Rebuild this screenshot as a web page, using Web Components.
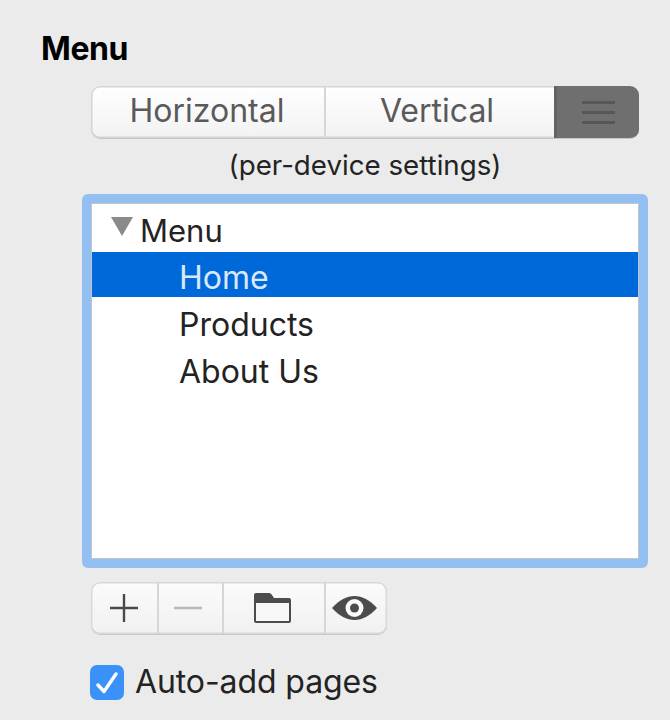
<!DOCTYPE html>
<html>
<head>
<meta charset="utf-8">
<style>
  html, body { margin: 0; background: #ebebeb; }
  body { font-family: Inter, "Liberation Sans", sans-serif; color: #232323; }
</style>
</head>
<body>
<settings-panel title-text="Menu">
  <seg-control></seg-control>
  <caption-text>(per-device settings)</caption-text>
  <menu-tree></menu-tree>
  <tool-bar></tool-bar>
  <check-row>Auto-add pages</check-row>
</settings-panel>

<script>
class SettingsPanel extends HTMLElement {
  connectedCallback() {
    this.attachShadow({ mode: 'open' });
    this.shadowRoot.innerHTML = `
      <style>
        :host { display: block; width: 670px; height: 720px; box-sizing: border-box; padding: 31px 0 0 41px; overflow: hidden; }
        h1 { margin: 0; font-size: 32px; line-height: 36px; font-weight: 700; color: #000; letter-spacing: -0.4px; }
        .body { display: flex; flex-direction: column; margin: 19px 0 0 41px; width: 566px; }
      </style>
      <h1>${this.getAttribute('title-text')}</h1>
      <div class="body">
        <slot></slot>
      </div>
    `;
  }
}

class SegControl extends HTMLElement {
  connectedCallback() {
    this.attachShadow({ mode: 'open' });
    this.shadowRoot.innerHTML = `
      <style>
        :host { display: flex; box-sizing: border-box; width: 548px; height: 53px; margin-left: 9px; border-radius: 9px; overflow: hidden; background: linear-gradient(#ffffff, #f2f2f2); box-shadow: inset 0 0 0 1.5px #d4d4d4; border-bottom: 1px solid #c6c6c6; }
        .seg { display: flex; align-items: center; justify-content: center; font-size: 32px; color: #5a5a5a; padding-bottom: 3px; box-sizing: border-box; }
        .seg + .seg { border-left: 2px solid #d6d6d6; }
        .a { width: 233px; padding-right: 1px; }
        .b { width: 230px; padding-right: 6px; }
        .c { flex: 1; background: #6f6f6f; border-left: 3px solid #636363 !important; flex-direction: column; gap: 7px; margin-bottom: -1px; padding-bottom: 0; }
        .c i { display: block; width: 33px; height: 3px; background: #575757; }
      </style>
      <div class="seg a">Horizontal</div>
      <div class="seg b">Vertical</div>
      <div class="seg c"><i></i><i></i><i></i></div>
    `;
  }
}

class CaptionText extends HTMLElement {
  connectedCallback() {
    this.attachShadow({ mode: 'open' });
    this.shadowRoot.innerHTML = `
      <style>
        :host { display: block; width: 548px; margin: 10px 0 13px 9px; text-align: center; font-size: 27.7px; line-height: 32px; }
      </style>
      <slot></slot>
    `;
  }
}

class MenuTree extends HTMLElement {
  connectedCallback() {
    this.attachShadow({ mode: 'open' });
    this.shadowRoot.innerHTML = `
      <style>
        :host { display: block; box-sizing: border-box; width: 566px; height: 374px; border: 9px solid #93c0f2; border-radius: 6px; background: #fff; padding: 1px; box-shadow: inset 0 0 0 1px #c4c4c4; font-size: 32px; }
        .row { display: flex; align-items: center; height: 47px; box-sizing: border-box; padding-top: 8px; }
        .root { padding-left: 48px; position: relative; height: 48px; font-size: 31px; padding-top: 4px; }
        .root svg { position: absolute; left: 19px; top: 13px; }
        .child { padding-left: 87px; }
        .sel { background: #0069d9; color: #dbe8fa; height: 45px; padding-top: 5px; }
      </style>
      <div class="row root">
        <svg width="22" height="20" viewBox="0 0 22 20"><path d="M0 0H22L11 19Z" fill="#8a8a8a"/></svg>
        Menu
      </div>
      <div class="row child sel">Home</div>
      <div class="row child">Products</div>
      <div class="row child">About Us</div>
    `;
  }
}

class ToolBar extends HTMLElement {
  connectedCallback() {
    this.attachShadow({ mode: 'open' });
    this.shadowRoot.innerHTML = `
      <style>
        :host { display: flex; box-sizing: border-box; width: 296px; height: 53px; margin: 14px 0 0 9px; border-radius: 9px; overflow: hidden; background: linear-gradient(#fbfbfb, #f1f1f1); box-shadow: inset 0 0 0 1.5px #d8d8d8; border-bottom: 1px solid #c8c8c8; }
        div { display: flex; align-items: center; justify-content: center; box-sizing: border-box; }
        div + div { border-left: 2px solid #d6d6d6; }
        .plus { width: 66px; }
        .minus { width: 65px; padding-right: 5px; }
        .folder { width: 102px; padding-right: 3px; }
        .eye { flex: 1; padding-right: 5px; }
      </style>
      <div class="plus"><svg width="28" height="28" viewBox="0 0 28 28"><path d="M14 0V28M0 14H28" stroke="#4a4a4a" stroke-width="2.4"/></svg></div>
      <div class="minus"><svg width="28" height="4" viewBox="0 0 28 4"><path d="M0 2H28" stroke="#b9b9b9" stroke-width="2.4"/></svg></div>
      <div class="folder"><svg width="37" height="30" viewBox="0 0 37 30"><path d="M0 2Q0 0 2 0H15Q17 0 18 2L20 5H35Q37 5 37 7V28Q37 30 35 30H2Q0 30 0 28Z" fill="#4c4c4c"/><rect x="2" y="10" width="33" height="18" fill="#f8f8f8"/></svg></div>
      <div class="eye"><svg width="45" height="24" viewBox="0 0 45 24"><path d="M0 12C7 4 15 0 22.5 0S38 4 45 12C38 20 30 24 22.5 24S7 20 0 12Z" fill="#4c4c4c"/><circle cx="22.5" cy="12" r="9" fill="#fafafa"/><circle cx="22.5" cy="12" r="4.5" fill="#4c4c4c"/></svg></div>
    `;
  }
}

class CheckRow extends HTMLElement {
  connectedCallback() {
    this.attachShadow({ mode: 'open' });
    this.shadowRoot.innerHTML = `
      <style>
        :host { display: flex; align-items: center; gap: 11px; margin: 30px 0 0 8px; height: 35px; font-size: 32px; letter-spacing: -0.1px; }
        .box { width: 34px; height: 35px; border-radius: 7px; background: #3a92f8; display: flex; align-items: center; justify-content: center; }
        .label { padding-bottom: 2px; }
      </style>
      <div class="box"><svg width="22" height="22" viewBox="0 0 22 22"><path d="M2 13L8 19.5L20 2" fill="none" stroke="#fff" stroke-width="3.4" stroke-linecap="round" stroke-linejoin="round"/></svg></div>
      <div class="label"><slot></slot></div>
    `;
  }
}

customElements.define('settings-panel', SettingsPanel);
customElements.define('seg-control', SegControl);
customElements.define('caption-text', CaptionText);
customElements.define('menu-tree', MenuTree);
customElements.define('tool-bar', ToolBar);
customElements.define('check-row', CheckRow);
</script>
</body>
</html>
